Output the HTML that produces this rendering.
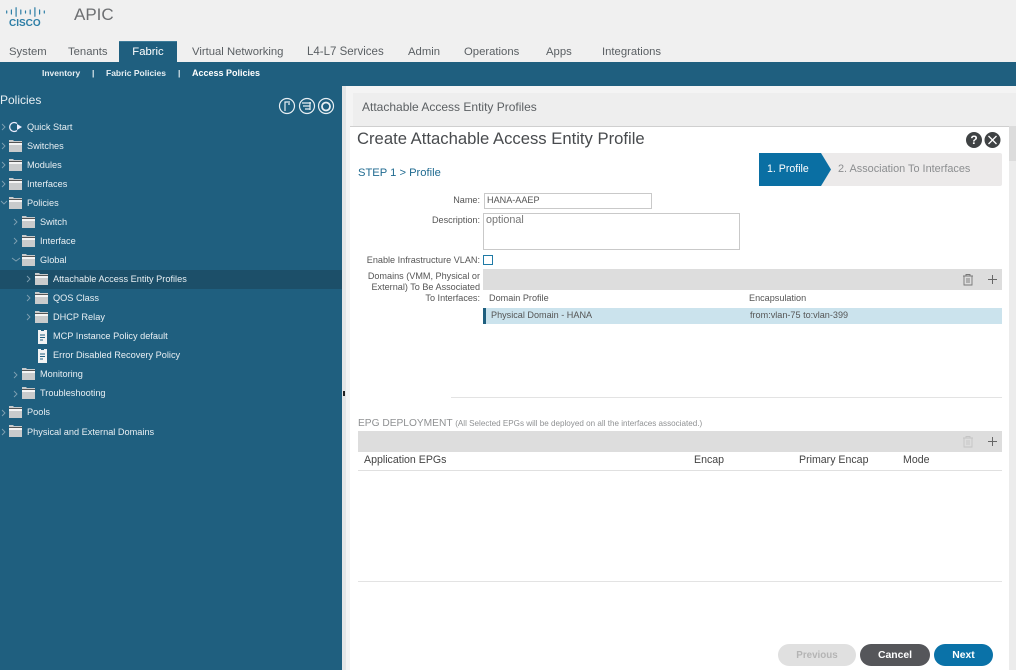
<!DOCTYPE html>
<html><head><meta charset="utf-8"><style>
html,body{margin:0;padding:0}
body{width:1016px;height:670px;position:relative;overflow:hidden;background:#f0f0f0;font-family:"Liberation Sans",sans-serif;filter:blur(.3px)}
.a{position:absolute;white-space:nowrap}
.nav{top:45px;font-size:11.3px;color:#5a5f63;line-height:15px}
.sub{top:68px;font-size:8.5px;color:#e6eef2;line-height:11px;font-weight:bold}
.t{font-size:9.2px;color:#e8eff3;line-height:12px}
.l{font-size:9.1px;color:#555;line-height:12px;text-align:right}
.h{font-size:10.6px;color:#444;line-height:14px}
</style></head><body>
<!-- header -->
<div class="a" style="left:0;top:0;width:1016px;height:62px;background:#f0f0f0"></div>
<svg class="a" style="left:6px;top:7px" width="39" height="10" viewBox="0 0 39 10"><g stroke="#2d7ea6" stroke-width="1.2" stroke-linecap="round"><path d="M.7 4v2M5.4 3v4M10.1 .7v8.6M14.8 3v4M19.5 4v2M24.2 3v4M28.9 .7v8.6M33.6 3v4M38.3 4v2"/></g></svg>
<div class="a" style="left:9px;top:19px;font-size:10px;font-weight:bold;color:#2d7ea6;line-height:10px">CISCO</div>
<div class="a" style="left:74px;top:5px;font-size:17px;color:#6d6f72;line-height:20px">APIC</div>
<div class="a nav" style="left:9px">System</div>
<div class="a nav" style="left:68px">Tenants</div>
<div class="a" style="left:119px;top:41px;width:58px;height:22px;background:#1f5f7f;border-top:1px solid #3d7b99;text-align:center;color:#fff;font-size:11.3px;line-height:21px;box-sizing:border-box">Fabric</div>
<div class="a nav" style="left:192px">Virtual Networking</div>
<div class="a nav" style="left:307px;font-size:11.5px">L4-L7 Services</div>
<div class="a nav" style="left:408px">Admin</div>
<div class="a nav" style="left:464px">Operations</div>
<div class="a nav" style="left:546px">Apps</div>
<div class="a nav" style="left:602px">Integrations</div>
<!-- sidebar -->
<div class="a" style="left:0;top:62px;width:1016px;height:24px;background:#1f5f7f"></div>
<div class="a sub" style="left:42px">Inventory</div>
<div class="a sub" style="left:92px">|</div>
<div class="a sub" style="left:106px">Fabric Policies</div>
<div class="a sub" style="left:178px">|</div>
<div class="a sub" style="left:192px;color:#fff;font-size:9px">Access Policies</div>
<div class="a" style="left:0;top:86px;width:342px;height:584px;background:#1f5f7f"></div>
<div class="a" style="left:0;top:93px;font-size:12px;color:#e8eff3;line-height:14px">Policies</div>
<svg class="a" style="left:278px;top:97px" width="58" height="18" viewBox="0 0 58 18" fill="none" stroke="#e8eff3" stroke-width="1.2"><circle cx="9" cy="9" r="7.5"/><circle cx="29" cy="9" r="7.5"/><circle cx="48" cy="9" r="7.5"/><path d="M7 14V5h5M10 7h2M24 6h9M25 9h7M27 12h5M32 5v8"/><circle cx="48" cy="9.5" r="4" stroke-width="1.8"/></svg>
<div class="a" style="left:0;top:270px;width:342px;height:19px;background:#1c4f69"></div>
<svg class="a" style="left:0;top:118px" width="342" height="330" viewBox="0 118 342 330">
<defs>
<g id="f"><path d="M0 0h4l1 1h8v11H0z" fill="#c9cbcc"/><rect x="0" y="3" width="13" height="2" fill="#f5f5f5"/><rect x="0" y="2" width="13" height="1" fill="#555"/></g>
<g id="d"><path d="M0 0h3v1h3V0h3v14H0z" fill="#f1f3f4"/><path d="M2 5h5M2 7.5h5M2 10h3" stroke="#1f5f7f" stroke-width="1"/></g>
</defs>
<g fill="none" stroke="#7fa0b2" stroke-width=".9"><path d="M2 124l3 3-3 3M2 143l3 3-3 3M2 162l3 3-3 3M2 181l3 3-3 3M1 201l3 3 3-3M14 219l3 3-3 3M14 238l3 3-3 3M12 258l4 3 4-3M27 276l3 3-3 3M27 295l3 3-3 3M27 314l3 3-3 3M14 372l3 3-3 3M14 391l3 3-3 3M2 410l3 3-3 3M2 429l3 3-3 3"/></g>
<path d="M17 123.5a4.5 4.5 0 1 0 0 7" fill="none" stroke="#eef" stroke-width="1.3"/><path d="M17 124l5 3-5 3z" fill="#eef"/>
<use href="#f" x="9" y="140"/><use href="#f" x="9" y="159"/><use href="#f" x="9" y="178"/><use href="#f" x="9" y="197"/>
<use href="#f" x="22" y="216"/><use href="#f" x="22" y="235"/><use href="#f" x="22" y="254"/>
<use href="#f" x="35" y="273"/><use href="#f" x="35" y="292"/><use href="#f" x="35" y="311"/>
<use href="#d" x="38" y="330"/><use href="#d" x="38" y="349"/>
<use href="#f" x="22" y="368"/><use href="#f" x="22" y="387"/>
<use href="#f" x="9" y="406"/><use href="#f" x="9" y="425"/>
</svg>
<div class="a t" style="left:27px;top:121px">Quick Start</div>
<div class="a t" style="left:27px;top:140px">Switches</div>
<div class="a t" style="left:27px;top:159px">Modules</div>
<div class="a t" style="left:27px;top:178px">Interfaces</div>
<div class="a t" style="left:27px;top:197px">Policies</div>
<div class="a t" style="left:40px;top:216px">Switch</div>
<div class="a t" style="left:40px;top:235px">Interface</div>
<div class="a t" style="left:40px;top:254px">Global</div>
<div class="a t" style="left:53px;top:273px">Attachable Access Entity Profiles</div>
<div class="a t" style="left:53px;top:292px">QOS Class</div>
<div class="a t" style="left:53px;top:311px">DHCP Relay</div>
<div class="a t" style="left:53px;top:330px">MCP Instance Policy default</div>
<div class="a t" style="left:53px;top:349px">Error Disabled Recovery Policy</div>
<div class="a t" style="left:40px;top:368px">Monitoring</div>
<div class="a t" style="left:40px;top:387px">Troubleshooting</div>
<div class="a t" style="left:27px;top:406px">Pools</div>
<div class="a t" style="left:27px;top:426px">Physical and External Domains</div>
<!-- divider -->
<div class="a" style="left:342px;top:86px;width:4px;height:584px;background:#e4e6e7"></div>
<div class="a" style="left:343px;top:391px;width:2px;height:5px;background:#222"></div>
<!-- panel behind -->
<div class="a" style="left:346px;top:86px;width:670px;height:584px;background:#f4f4f4"></div>
<div class="a" style="left:353px;top:93px;width:663px;height:33px;background:#eeeeee"></div>
<div class="a" style="left:362px;top:100px;font-size:12px;color:#5c6063;line-height:15px">Attachable Access Entity Profiles</div>
<!-- dialog -->
<div class="a" style="left:350px;top:126px;width:659px;height:544px;background:#fff;border-top:1px solid #cfcfcf;box-sizing:border-box"></div>
<div class="a" style="left:1009px;top:126px;width:7px;height:544px;background:#ececec"></div>
<div class="a" style="left:1009px;top:126px;width:7px;height:35px;background:#dcdcdc"></div>
<div class="a" style="left:357px;top:129px;font-size:16.65px;color:#484b4e;line-height:20px">Create Attachable Access Entity Profile</div>
<div class="a" style="left:966px;top:132px;width:16px;height:16px;border-radius:50%;background:#3f4244;color:#fff;font-weight:bold;font-size:12px;line-height:16px;text-align:center">?</div>
<svg class="a" style="left:984px;top:132px" width="17" height="16" viewBox="0 0 17 16"><circle cx="8.5" cy="8" r="8" fill="#3f4244"/><path d="M4.5 4l8 8M12.500 4l-8 8" stroke="#fff" stroke-width="1.3"/></svg>
<div class="a" style="left:358px;top:166px;font-size:11.2px;color:#1f6a90;line-height:14px">STEP 1 &gt; Profile</div>
<!-- stepper -->
<div class="a" style="left:759px;top:153px;width:243px;height:33px;background:#eceaea;border-radius:2px"></div>
<svg class="a" style="left:759px;top:153px" width="73" height="33"><path d="M0 0h62l10 16.5L62 33H0z" fill="#0a6fa3"/></svg>
<div class="a" style="left:767px;top:162px;font-size:10.6px;color:#fff;line-height:14px">1. Profile</div>
<div class="a" style="left:838px;top:162px;font-size:10.9px;color:#8c8e90;line-height:14px">2. Association To Interfaces</div>
<!-- form -->
<div class="a l" style="right:536px;top:194px">Name:</div>
<div class="a" style="left:484px;top:193px;width:168px;height:16px;border:1px solid #c9c9c9;box-sizing:border-box;font-size:9.1px;color:#555;line-height:13px;padding:0 0 0 2px">HANA-AAEP</div>
<div class="a l" style="right:536px;top:214px">Description:</div>
<div class="a" style="left:483px;top:213px;width:257px;height:37px;border:1px solid #c9c9c9;box-sizing:border-box;font-size:10.8px;color:#777;line-height:12px;padding-left:2px">optional</div>
<div class="a l" style="right:536px;top:254px">Enable Infrastructure VLAN:</div>
<div class="a" style="left:483px;top:255px;width:10px;height:10px;border:1px solid #1f7aa6;box-sizing:border-box"></div>
<div class="a l" style="right:536px;top:271px;line-height:11px">Domains (VMM, Physical or<br>External) To Be Associated<br>To Interfaces:</div>
<div class="a" style="left:483px;top:269px;width:519px;height:21px;background:#dddddd"></div>
<svg class="a" style="left:962px;top:273px" width="12" height="13" viewBox="0 0 12 13" fill="none" stroke="#777" stroke-width=".9"><path d="M1 3h10M4 3V1.5h4V3M2 3v9h8V3M5 5v5M7 5v5"/></svg>
<svg class="a" style="left:987px;top:274px" width="11" height="11" viewBox="0 0 11 11"><path d="M5.5 1v9M1 5.5h9" stroke="#666" stroke-width="1"/></svg>
<div class="a l" style="left:489px;top:292px">Domain Profile</div>
<div class="a l" style="left:749px;top:292px">Encapsulation</div>
<div class="a" style="left:483px;top:308px;width:519px;height:16px;background:#cbe3ed"></div>
<div class="a" style="left:483px;top:308px;width:3px;height:16px;background:#1f5f7f"></div>
<div class="a l" style="left:491px;top:309px">Physical Domain - HANA</div>
<div class="a l" style="left:750px;top:309px">from:vlan-75 to:vlan-399</div>
<div class="a" style="left:451px;top:397px;width:551px;height:1px;background:#e3e3e3"></div>
<!-- EPG -->
<div class="a" style="left:358px;top:417px;font-size:10.2px;color:#8f9193;line-height:13px">EPG DEPLOYMENT <span style="font-size:8.1px">(All Selected EPGs will be deployed on all the interfaces associated.)</span></div>
<div class="a" style="left:358px;top:431px;width:644px;height:21px;background:#dddddd"></div>
<svg class="a" style="left:962px;top:435px" width="12" height="13" viewBox="0 0 12 13" fill="none" stroke="#c4c4c4" stroke-width=".9"><path d="M1 3h10M4 3V1.5h4V3M2 3v9h8V3M5 5v5M7 5v5"/></svg>
<svg class="a" style="left:987px;top:436px" width="11" height="11" viewBox="0 0 11 11"><path d="M5.5 1v9M1 5.5h9" stroke="#666" stroke-width="1"/></svg>
<div class="a h" style="left:364px;top:453px">Application EPGs</div>
<div class="a h" style="left:694px;top:453px">Encap</div>
<div class="a h" style="left:799px;top:453px">Primary Encap</div>
<div class="a h" style="left:903px;top:453px">Mode</div>
<div class="a" style="left:358px;top:470px;width:644px;height:1px;background:#e0e0e0"></div>
<div class="a" style="left:358px;top:581px;width:644px;height:1px;background:#e3e3e3"></div>
<!-- buttons -->
<div class="a" style="left:778px;top:644px;width:78px;height:22px;border-radius:11px;background:#e0e0e0;color:#b4b4b4;font-size:9.8px;font-weight:bold;text-align:center;line-height:23px">Previous</div>
<div class="a" style="left:860px;top:644px;width:70px;height:22px;border-radius:11px;background:#55565a;color:#fff;font-size:10.4px;font-weight:bold;text-align:center;line-height:23px;box-sizing:border-box">Cancel</div>
<div class="a" style="left:934px;top:644px;width:59px;height:22px;border-radius:11px;background:#0a72a8;color:#fff;font-size:10.4px;font-weight:bold;text-align:center;line-height:23px">Next</div>
</body></html>
